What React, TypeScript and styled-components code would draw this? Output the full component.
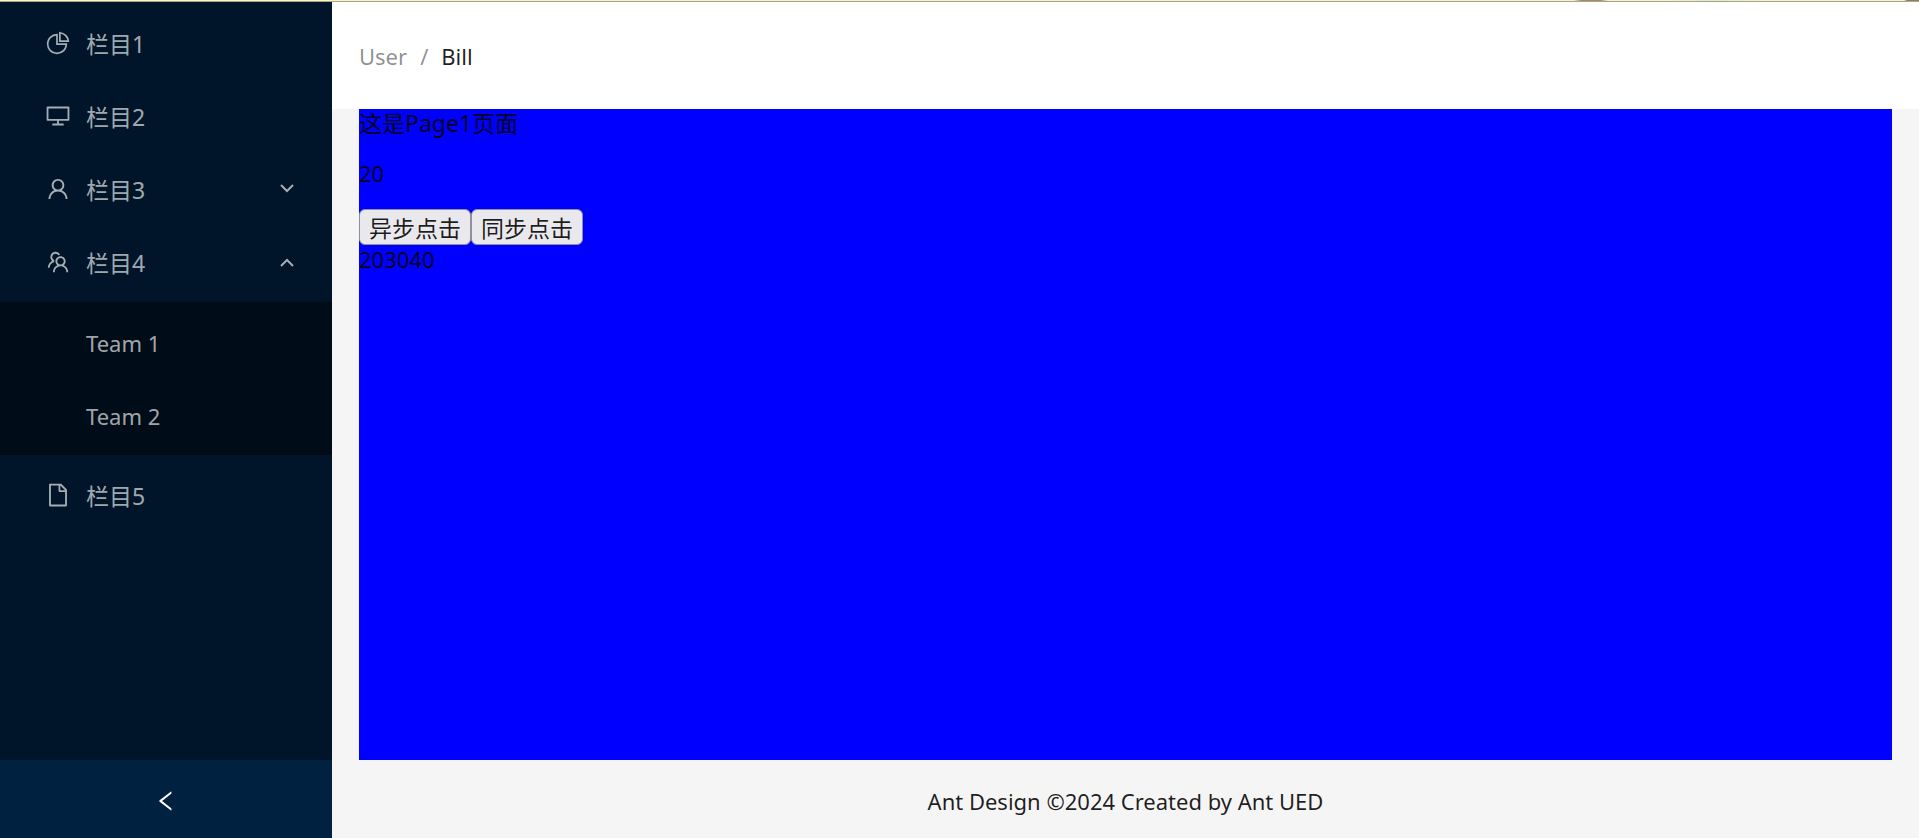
import React, { useState } from "react";
import styled, { createGlobalStyle } from "styled-components";
import {
  AiOutlineDesktop,
  AiOutlineFile,
  AiOutlineLeft,
  AiOutlinePieChart,
  AiOutlineTeam,
  AiOutlineUser,
} from "react-icons/ai";

const GlobalStyle = createGlobalStyle`
  *, *::before, *::after { box-sizing: border-box; }
  body {
    margin: 0;
    font-family: "Noto Sans", "Noto Sans CJK SC", sans-serif;
    font-size: 22px;
    line-height: 28px;
    color: rgba(0, 0, 0, 0.88);
    background: #f5f5f5;
  }
`;

const Page = styled.div`
  display: flex;
  flex-direction: column;
  min-height: 100vh;
`;

const TopStrip = styled.div`
  height: 2px;
  border-bottom: 1px solid #a9a57c;
  background: linear-gradient(
    90deg,
    #f5f3d0 82%,
    #a08a68 82.4%,
    #a08a68 83.4%,
    #f5f3d0 83.8%,
    #f5f3d0 87%,
    #dfe6d8 89%,
    #f5f3d0 92%,
    #f5f3d0 99.2%,
    #8f7d60 99.4%
  );
`;

const Shell = styled.div`
  display: flex;
  flex: 1;
`;

const Sider = styled.aside`
  display: flex;
  flex-direction: column;
  flex: 0 0 332px;
  background: #001529;
`;

const Menu = styled.ul`
  display: flex;
  flex: 1;
  flex-direction: column;
  gap: 7px;
  margin: 0;
  padding: 8px 0;
  list-style: none;
`;

const SubMenu = styled(Menu)`
  margin-top: 7px;
  padding: 7px 0;
  background: #000c17;
`;

const MenuButton = styled.button<{ $nested?: boolean }>`
  display: flex;
  align-items: center;
  gap: 15px;
  width: 100%;
  height: 66px;
  padding: 0 38px 0 ${(p) => (p.$nested ? 86 : 45)}px;
  border: 0;
  background: transparent;
  color: rgba(255, 255, 255, 0.65);
  font: inherit;
  text-align: left;
  cursor: pointer;

  &:hover {
    color: #fff;
  }
`;

const MenuIcon = styled.span`
  display: flex;
  font-size: 26px;
`;

const MenuLabel = styled.span<{ $cjk?: boolean }>`
  flex: 1;
  padding-top: 2px;
  font-size: ${(p) => (p.$cjk ? 23 : 22)}px;
`;

const Chevron = styled.svg<{ $open: boolean }>`
  width: 14px;
  height: 12px;
  fill: none;
  stroke: currentColor;
  stroke-width: 2;
  transform: ${(p) => (p.$open ? "rotate(180deg)" : "none")};
`;

const Collapser = styled.button`
  display: flex;
  align-items: center;
  justify-content: center;
  height: 78px;
  padding-top: 4px;
  border: 0;
  background: #002140;
  color: #fff;
  font-size: 26px;
  cursor: pointer;
`;

const Main = styled.div`
  display: flex;
  flex: 1;
  flex-direction: column;
  min-width: 0;
`;

const Header = styled.header`
  display: flex;
  align-items: center;
  height: 107px;
  padding: 0 27px;
  background: #fff;
`;

const Breadcrumb = styled.ol`
  display: flex;
  gap: 13px;
  margin: 0;
  padding: 0;
  list-style: none;
`;

const Crumb = styled.li<{ $current?: boolean }>`
  color: ${(p) => (p.$current ? "rgba(0, 0, 0, 0.88)" : "rgba(0, 0, 0, 0.45)")};
`;

const Content = styled.main`
  flex: 1;
  margin: 0 27px;
  background: #0000ff;
`;

const PageTitle = styled.div`
  font-size: 23px;
`;

const Count = styled.p`
  margin: 22px 0;
`;

const Actions = styled.div`
  display: flex;
`;

const ActionButton = styled.button`
  height: 36px;
  padding: 2px 9px 0;
  border: 1px solid #8f8f9d;
  border-radius: 6px;
  background: #e9e9ed;
  color: rgba(0, 0, 0, 0.88);
  font: inherit;
  font-size: 23px;
`;

const Footer = styled.footer`
  display: flex;
  align-items: center;
  justify-content: center;
  height: 78px;
  padding: 4px 27px 0;
`;

const Arrow = ({ open }: { open: boolean }) => (
  <Chevron $open={open} viewBox="0 0 14 12" aria-hidden="true">
    <path d="M1 2l6 6 6-6" />
  </Chevron>
);

type Item = {
  label: string;
  icon: React.ReactNode;
  children?: string[];
};

const items: Item[] = [
  { label: "栏目1", icon: <AiOutlinePieChart /> },
  { label: "栏目2", icon: <AiOutlineDesktop /> },
  { label: "栏目3", icon: <AiOutlineUser />, children: ["Tom", "Bill", "Alex"] },
  { label: "栏目4", icon: <AiOutlineTeam />, children: ["Team 1", "Team 2"] },
  { label: "栏目5", icon: <AiOutlineFile /> },
];

export default function App() {
  const [openItem, setOpenItem] = useState("栏目4");

  return (
    <>
      <GlobalStyle />
      <Page>
        <TopStrip />
        <Shell>
          <Sider>
            <Menu>
              {items.map(({ label, icon, children }) => {
                const open = openItem === label;
                return (
                  <li key={label}>
                    <MenuButton
                      type="button"
                      aria-expanded={children ? open : undefined}
                      onClick={() => children && setOpenItem(open ? "" : label)}
                    >
                      <MenuIcon>{icon}</MenuIcon>
                      <MenuLabel $cjk>{label}</MenuLabel>
                      {children && <Arrow open={open} />}
                    </MenuButton>
                    {children && open && (
                      <SubMenu>
                        {children.map((child) => (
                          <li key={child}>
                            <MenuButton type="button" $nested>
                              <MenuLabel>{child}</MenuLabel>
                            </MenuButton>
                          </li>
                        ))}
                      </SubMenu>
                    )}
                  </li>
                );
              })}
            </Menu>
            <Collapser type="button" aria-label="Collapse menu">
              <AiOutlineLeft />
            </Collapser>
          </Sider>
          <Main>
            <Header>
              <nav aria-label="Breadcrumb">
                <Breadcrumb>
                  <Crumb>User</Crumb>
                  <Crumb aria-hidden="true">/</Crumb>
                  <Crumb $current>Bill</Crumb>
                </Breadcrumb>
              </nav>
            </Header>
            <Content>
              <PageTitle>这是Page1页面</PageTitle>
              <Count>20</Count>
              <Actions>
                <ActionButton type="button">异步点击</ActionButton>
                <ActionButton type="button">同步点击</ActionButton>
              </Actions>
              <div>203040</div>
            </Content>
            <Footer>Ant Design ©2024 Created by Ant UED</Footer>
          </Main>
        </Shell>
      </Page>
    </>
  );
}
